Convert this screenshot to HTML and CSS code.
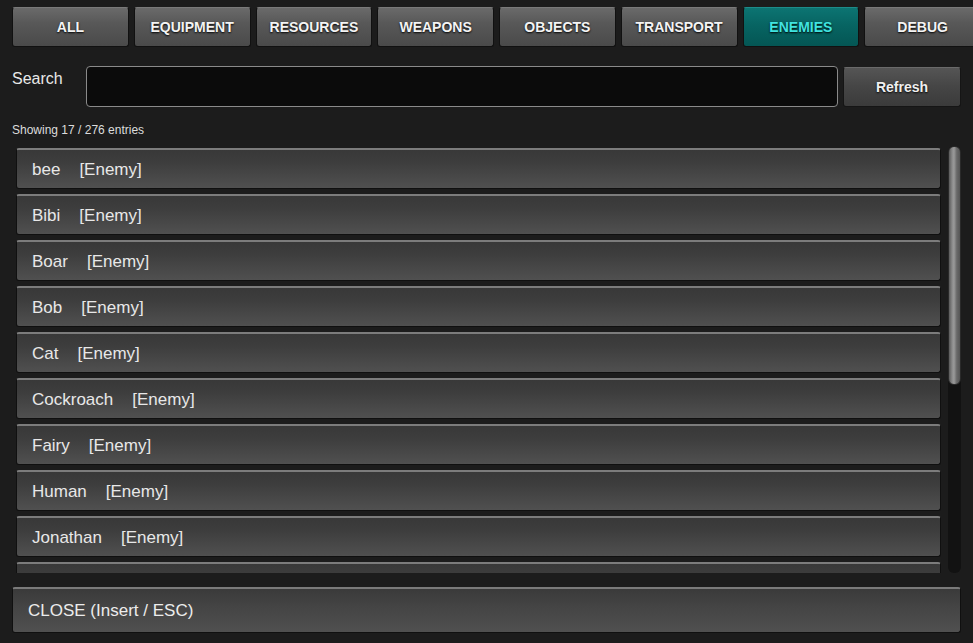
FILE: index.html
```html
<!DOCTYPE html>
<html lang="en">
<head>
    <meta charset="UTF-8">
    <meta name="viewport" content="width=device-width, initial-scale=1.0">
    <title>Spawn Menu</title>
    <link rel="stylesheet" href="styles.css">
</head>
<body>
    <!-- category tabs -->
    <div class="tabs">
        <button class="tab">ALL</button>
        <button class="tab">EQUIPMENT</button>
        <button class="tab">RESOURCES</button>
        <button class="tab">WEAPONS</button>
        <button class="tab">OBJECTS</button>
        <button class="tab">TRANSPORT</button>
        <button class="tab active">ENEMIES</button>
        <button class="tab">DEBUG</button>
    </div>

    <!-- search -->
    <div class="search-row">
        <label class="search-label">Search</label>
        <input class="search-input" type="text">
        <button class="refresh">Refresh</button>
    </div>

    <div class="count">Showing 17 / 276 entries</div>

    <!-- entries -->
    <div class="list-wrap">
        <div class="list">
            <div class="entry">bee<span class="kind">[Enemy]</span></div>
            <div class="entry">Bibi<span class="kind">[Enemy]</span></div>
            <div class="entry">Boar<span class="kind">[Enemy]</span></div>
            <div class="entry">Bob<span class="kind">[Enemy]</span></div>
            <div class="entry">Cat<span class="kind">[Enemy]</span></div>
            <div class="entry">Cockroach<span class="kind">[Enemy]</span></div>
            <div class="entry">Fairy<span class="kind">[Enemy]</span></div>
            <div class="entry">Human<span class="kind">[Enemy]</span></div>
            <div class="entry">Jonathan<span class="kind">[Enemy]</span></div>
            <div class="entry"></div>
        </div>
        <div class="scrollbar">
            <div class="thumb"></div>
        </div>
    </div>

    <button class="close">CLOSE (Insert / ESC)</button>
</body>
</html>
```

FILE: styles.css
```css
html, body {
    margin: 0;
    height: 100%;
}
body {
    font-family: 'Liberation Sans', Arial, sans-serif;
    background-color: #1c1c1c;
    color: #e6e6e6;
    overflow: hidden;
    padding: 7px 12px 0 12px;
    box-sizing: border-box;
    width: 973px;
}
button {
    font-family: inherit;
    cursor: pointer;
}
.tabs {
    display: flex;
    gap: 5px;
    margin-right: -12px;
    overflow: hidden;
}
.tab {
    flex: 0 0 116.75px;
    height: 40px;
    border: 1px solid #111;
    border-top-color: #7a7a7a;
    border-radius: 3px;
    background: linear-gradient(#6a6a6a 0%, #585858 40%, #4a4a4a 100%);
    color: #f4f4f4;
    font-size: 14px;
    font-weight: bold;
    text-shadow: 0 1px 2px #000;
    padding: 0;
}
.tab.active {
    border-top-color: #1d8c8a;
    background: linear-gradient(#0c7472 0%, #076462 45%, #045654 100%);
    color: #40e4e0;
}
.search-row {
    display: flex;
    margin-top: 19px;
    height: 41px;
}
.search-label {
    width: 74px;
    font-size: 16px;
    padding-top: 4px;
    color: #e8e8e8;
}
.search-input {
    width: 752px;
    height: 41px;
    box-sizing: border-box;
    background: #0b0b0b;
    border: 1px solid #8a8a8a;
    border-radius: 4px;
    color: #eee;
    margin: 0;
}
.refresh {
    margin-left: 5px;
    width: 118px;
    height: 40px;
    margin-top: 1px;
    border: 1px solid #151515;
    border-top-color: #6a6a6a;
    border-radius: 3px;
    background: linear-gradient(#555 0%, #454545 50%, #3b3b3b 100%);
    color: #f0f0f0;
    font-size: 14px;
    font-weight: bold;
    text-shadow: 0 1px 2px #000;
}
.count {
    font-size: 12px;
    margin-top: 16px;
    color: #dcdcdc;
}
.list-wrap {
    display: flex;
    margin: 9px 0 0 4px;
    height: 427px;
    gap: 7px;
}
.list {
    width: 925px;
    overflow: hidden;
    display: flex;
    flex-direction: column;
    gap: 5px;
    padding-top: 2px;
}
.entry {
    flex: 0 0 41px;
    box-sizing: border-box;
    display: flex;
    align-items: center;
    padding: 2px 0 0 15px;
    font-size: 17px;
    color: #e8e8e8;
    border: 1px solid #101010;
    border-top: 2px solid #7c7c7c;
    border-radius: 3px;
    background: linear-gradient(#383838 0%, #3e3e3e 35%, #505050 100%);
}
.kind {
    margin-left: 19px;
}
.scrollbar {
    width: 13px;
    background: #121212;
    border-radius: 6px;
}
.thumb {
    height: 239px;
    border-radius: 6px;
    box-sizing: border-box;
    border: 1px solid #2a2a2a;
    background: linear-gradient(90deg, #5a5a5a 0%, #8c8c8c 30%, #9a9a9a 45%, #6a6a6a 70%, #555 100%);
}
.close {
    display: block;
    margin-top: 14px;
    width: 949px;
    height: 46px;
    text-align: left;
    padding-left: 15px;
    font-size: 17px;
    color: #ececec;
    border: 1px solid #101010;
    border-top: 2px solid #7a7a7a;
    border-radius: 3px;
    background: linear-gradient(#3a3a3a 0%, #444 40%, #505050 100%);
}
```
